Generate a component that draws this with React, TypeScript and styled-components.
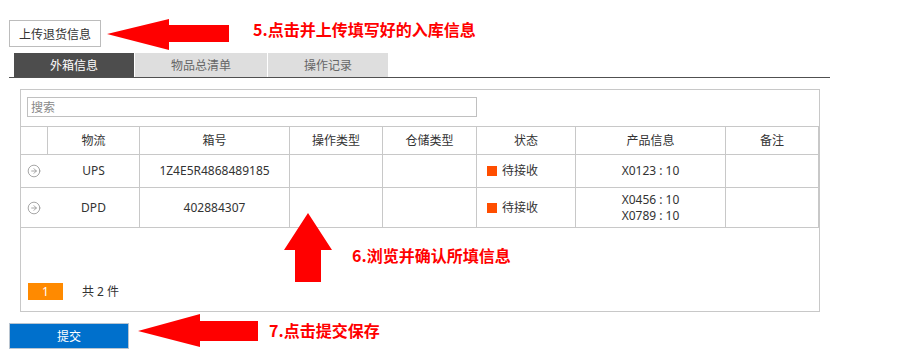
import React from "react";
import styled, { createGlobalStyle } from "styled-components";
import { CircleArrowRight } from "lucide-react";

const Global = createGlobalStyle`
  html, body { margin: 0; padding: 0; background: #fff; }
  body { font-family: "Noto Sans", "Noto Sans CJK SC", sans-serif; font-size: 12px; color: #333; }
  * { box-sizing: border-box; }
`;

const Page = styled.div`
  position: relative;
  width: 900px;
  height: 351px;
  padding: 20px 0 0 9px;
  overflow: hidden;
`;

const UploadButton = styled.button`
  display: flex;
  align-items: center;
  justify-content: center;
  width: 92px;
  height: 27px;
  padding: 0;
  border: 1px solid #bcbcbc;
  background: #fff;
  color: #333;
  font: 12px "Noto Sans", "Noto Sans CJK SC", sans-serif;
`;

const TabBar = styled.div`
  display: flex;
  gap: 1px;
  width: 821px;
  margin-top: 6px;
  padding-left: 5px;
  border-bottom: 1px solid #505050;
`;

const Tab = styled.div<{ $active?: boolean; $w: number }>`
  display: flex;
  align-items: center;
  justify-content: center;
  width: ${(p) => p.$w}px;
  height: 24px;
  background: ${(p) => (p.$active ? "#4d4d4d" : "#dedede")};
  color: ${(p) => (p.$active ? "#fff" : "#666")};
  font-size: 12px;
`;

const Panel = styled.div`
  width: 800px;
  height: 223px;
  margin: 11px 0 0 11px;
  padding-top: 7px;
  border: 1px solid #c8c8c8;
  display: flex;
  flex-direction: column;
`;

const SearchRow = styled.div`
  padding-left: 6px;
`;

const SearchInput = styled.div`
  width: 450px;
  height: 20px;
  border: 1px solid #c0c0c0;
  padding-left: 3px;
  display: flex;
  align-items: center;
  color: #888;
  font-size: 12px;
`;

const Table = styled.div`
  margin-top: 9px;
  border-top: 1px solid #c8c8c8;
`;

const Row = styled.div<{ $h: number }>`
  display: grid;
  grid-template-columns: 27px 92px 150px 93px 94px 99px 150px 93px;
  height: ${(p) => p.$h}px;
  border-bottom: 1px solid #c8c8c8;
`;

const Cell = styled.div<{ $noLine?: boolean; $left?: boolean }>`
  display: flex;
  flex-direction: column;
  align-items: ${(p) => (p.$left ? "flex-start" : "center")};
  justify-content: center;
  padding-left: ${(p) => (p.$left ? "10px" : "0")};
  border-right: 1px solid ${(p) => (p.$noLine ? "transparent" : "#c8c8c8")};
  line-height: 16px;
  color: #333;
`;

const StatusLine = styled.div`
  display: flex;
  align-items: center;
  gap: 5px;
`;

const StatusDot = styled.span`
  width: 10px;
  height: 10px;
  background: #ff4e00;
`;

const Pager = styled.div`
  display: flex;
  align-items: center;
  gap: 19px;
  margin: 54px 0 0 7px;
`;

const PageNum = styled.div`
  width: 35px;
  height: 17px;
  background: #ff8a00;
  color: #fff;
  display: flex;
  align-items: center;
  justify-content: center;
  font-size: 12px;
`;

const Total = styled.span`
  color: #333;
  font-size: 12px;
`;

const SubmitButton = styled.button`
  display: flex;
  align-items: center;
  justify-content: center;
  width: 120px;
  height: 26px;
  margin-top: 11px;
  padding: 0;
  border: 1px solid #b8c4d0;
  background: #0070cc;
  color: #fff;
  font: 12px "Noto Sans", "Noto Sans CJK SC", sans-serif;
`;

const Note = styled.div<{ $x: number; $y: number }>`
  position: absolute;
  left: ${(p) => p.$x}px;
  top: ${(p) => p.$y}px;
  color: #ff0000;
  font: 700 16px/16px "Noto Sans CJK SC", "Noto Sans", sans-serif;
  white-space: nowrap;
`;

const Overlay = styled.svg`
  position: absolute;
  left: 0;
  top: 0;
  pointer-events: none;
`;

const rows = [
  { carrier: "UPS", box: "1Z4E5R4868489185", products: ["X0123 : 10"], h: 33 },
  { carrier: "DPD", box: "402884307", products: ["X0456 : 10", "X0789 : 10"], h: 40 },
];

export default function App() {
  return (
    <>
      <Global />
      <Page>
        <UploadButton>上传退货信息</UploadButton>
        <TabBar>
          <Tab $active $w={120}>外箱信息</Tab>
          <Tab $w={132}>物品总清单</Tab>
          <Tab $w={120}>操作记录</Tab>
        </TabBar>
        <Panel>
          <SearchRow>
            <SearchInput>搜索</SearchInput>
          </SearchRow>
          <Table>
            <Row $h={28}>
              <Cell />
              <Cell>物流</Cell>
              <Cell>箱号</Cell>
              <Cell>操作类型</Cell>
              <Cell>仓储类型</Cell>
              <Cell>状态</Cell>
              <Cell>产品信息</Cell>
              <Cell>备注</Cell>
            </Row>
            {rows.map((r) => (
              <Row $h={r.h} key={r.box}>
                <Cell $noLine>
                  <CircleArrowRight size={14} color="#999" strokeWidth={1.5} />
                </Cell>
                <Cell>{r.carrier}</Cell>
                <Cell>{r.box}</Cell>
                <Cell />
                <Cell />
                <Cell $left>
                  <StatusLine>
                    <StatusDot />
                    待接收
                  </StatusLine>
                </Cell>
                <Cell>
                  {r.products.map((p) => (
                    <div key={p}>{p}</div>
                  ))}
                </Cell>
                <Cell />
              </Row>
            ))}
          </Table>
          <Pager>
            <PageNum>1</PageNum>
            <Total>共 2 件</Total>
          </Pager>
        </Panel>
        <SubmitButton>提交</SubmitButton>

        <Overlay width="900" height="351" viewBox="0 0 900 351">
          <polygon fill="#ff0000" points="107,34 169,19 169,25 229,25 229,42 169,42 169,50" />
          <polygon fill="#ff0000" points="308,213 332,250 321,250 321,282 295,282 295,250 284,250" />
          <polygon fill="#ff0000" points="138,331 200,314 200,321 258,321 258,341 200,341 200,347" />
        </Overlay>
        <Note $x={253} $y={21}>5.点击并上传填写好的入库信息</Note>
        <Note $x={352} $y={247}>6.浏览并确认所填信息</Note>
        <Note $x={269} $y={322}>7.点击提交保存</Note>
      </Page>
    </>
  );
}
